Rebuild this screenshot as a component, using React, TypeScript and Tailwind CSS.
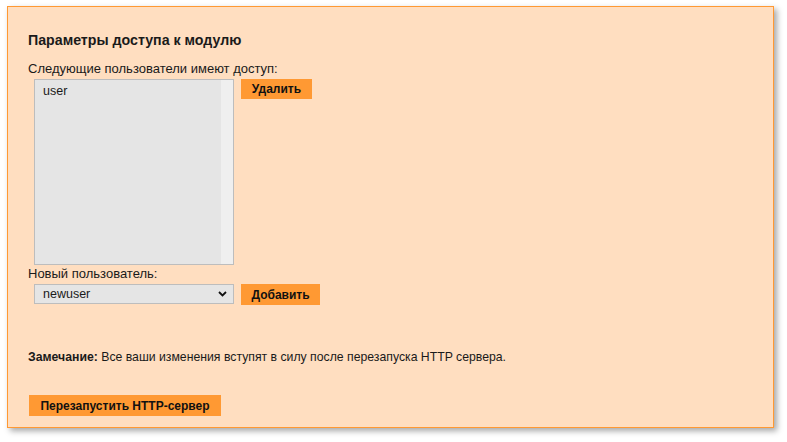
import React from 'react';

const font = { fontFamily: '"Liberation Sans", Arial, sans-serif' };

function OrangeButton({ children, className = '' }: { children: React.ReactNode; className?: string }) {
  return (
    <button
      className={`bg-[#ff9933] text-[12px] font-bold text-[#111] leading-none flex items-center justify-center ${className}`}
    >
      {children}
    </button>
  );
}

export default function App() {
  return (
    <div className="w-[787px] h-[442px] bg-white pt-[6px] pl-[7px]" style={font}>
      <div className="w-[767px] h-[422px] bg-[#ffdec0] border border-[#ff9933] shadow-[3px_3px_6px_rgba(0,0,0,0.35)] pt-[25px] pl-[20px] flex flex-col text-[#1a1a1a]">
        <h3 className="text-[14.2px] leading-[16px] font-bold">Параметры доступа к модулю</h3>

        <div className="mt-[14px] text-[13px] leading-[14px]">Следующие пользователи имеют доступ:</div>
        <div className="mt-[3px] ml-[6px] flex items-start">
          <div className="w-[200px] h-[186px] border border-[#bdbdbd] bg-[#e5e5e5] flex">
            <div className="flex-1 pl-[8px] pt-[4px] text-[12.5px] leading-[14px]">user</div>
            <div className="w-[12px] bg-[#efefef]" />
          </div>
          <OrangeButton className="ml-[7px] w-[71px] h-[20px]">Удалить</OrangeButton>
        </div>

        <div className="mt-[2px] text-[13px] leading-[14px]">Новый пользователь:</div>
        <div className="mt-[3px] ml-[6px] flex items-start">
          <div className="relative w-[200px] h-[20px]">
            <select
              defaultValue="newuser"
              className="block appearance-none w-full h-full border border-[#bdbdbd] bg-[#e5e5e5] pl-[8px] text-[12.5px] text-[#1a1a1a] outline-none"
              style={font}
            >
              <option value="newuser">newuser</option>
            </select>
            <svg
              className="absolute right-[7px] top-[7px] pointer-events-none"
              width="9"
              height="6"
              viewBox="0 0 9 6"
            >
              <path d="M1 1 L4.5 4.5 L8 1" fill="none" stroke="#111" strokeWidth="1.8" />
            </svg>
          </div>
          <OrangeButton className="ml-[7px] w-[79px] h-[21px]">Добавить</OrangeButton>
        </div>

        <p className="mt-[45px] text-[12.25px] leading-[14px]">
          <span className="font-bold">Замечание:</span> Все ваши изменения вступят в силу после перезапуска HTTP сервера.
        </p>

        <OrangeButton className="mt-[31px] ml-[1px] w-[192px] h-[21px]">Перезапустить HTTP-сервер</OrangeButton>
      </div>
    </div>
  );
}
